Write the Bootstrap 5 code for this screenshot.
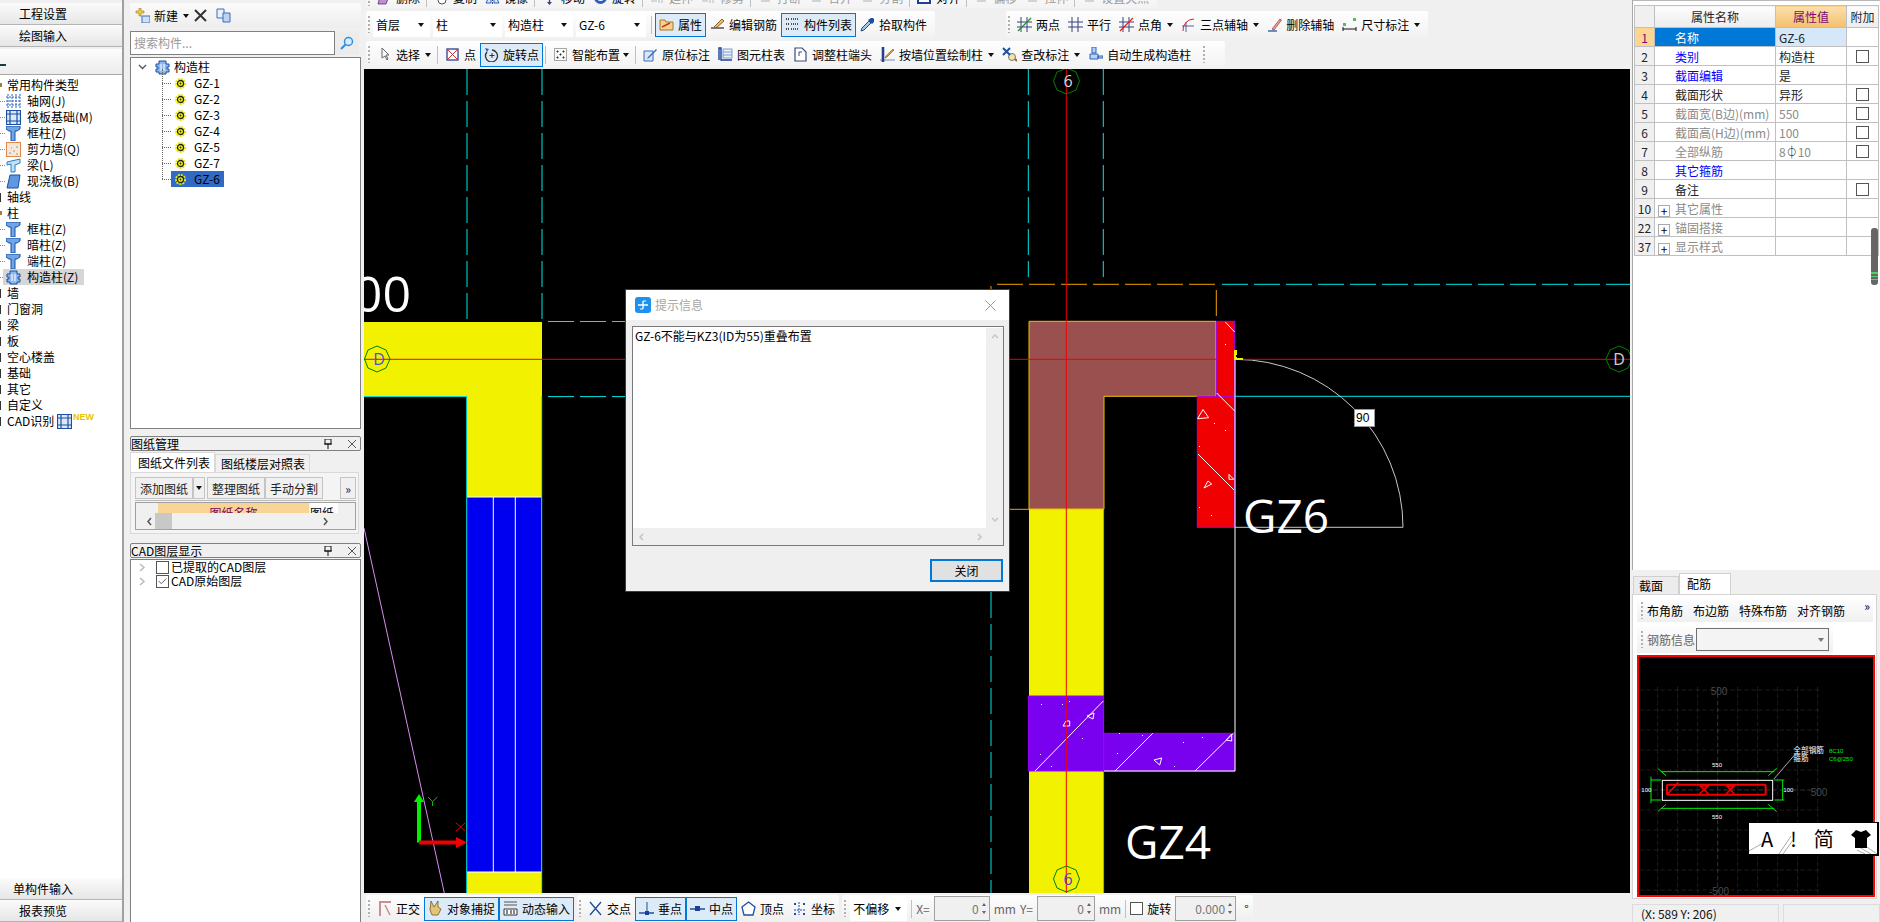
<!DOCTYPE html>
<html>
<head>
  <meta charset="utf-8">
  <title>钢筋算量</title>
  <link href="https://cdn.jsdelivr.net/npm/bootstrap@5.3.2/dist/css/bootstrap.min.css" rel="stylesheet" type="text/css" />
  <style>
    html, body { height: 922px; overflow: hidden; }
    body { background: #f0f0f0; color: #000; font: 12px/16px "Noto Sans CJK SC", "Liberation Sans", sans-serif; }
    .ic { width: 15px; height: 15px; flex: none; display: block; }
    .app { width: 1880px; height: 922px; }

    /* left navigation */
    .side-nav { width: 124px; flex: none; border-right: 2px solid #a0a0a0; padding-top: 3px; }
    .nav-strip { height: 22px; line-height: 21px; padding-left: 19px; background: linear-gradient(#fbfbfb, #e6e6e6); border-bottom: 1px solid #b5b5b5; }
    .nav-strip.wide { padding-left: 13px; }
    .tree-head { height: 25px; margin-top: 2px; background: linear-gradient(#fcfcfc, #ececec); position: relative; }
    .tree-head i { position: absolute; left: 0; top: 15px; width: 6px; height: 2px; background: #1b3a44; }
    .nav-tree { background: #fff; padding-top: 2px; flex: 1 1 auto; border-top: 1px solid #a8a8a8; }
    .nav-row { height: 16px; display: flex; align-items: center; white-space: nowrap; position: relative; }
    .nav-row.grp { padding-left: 7px; }
    .nav-row.grp::before { content: ""; position: absolute; left: 0; top: 4px; width: 1px; height: 9px; background: #333; }
    .nav-row.grp.open::before { top: 6px; width: 2px; height: 4px; background: #a08040; }
    .nav-row.leaf { padding-left: 6px; gap: 6px; }
    .nav-row.leaf::before { content: ""; position: absolute; left: 0; top: 8px; width: 5px; border-top: 1px dotted #888; }
    .nav-row.cur::after { content: ""; position: absolute; z-index: 0; left: 3px; top: 0; width: 81px; height: 16px; background: #d6d6d6; }
    .nav-row.cur > * { position: relative; z-index: 1; }
    .new-tag { color: #e8c400; font-weight: 700; font-size: 9px; line-height: 8px; margin: -8px 0 0 1px; font-family: "Liberation Sans", sans-serif; }

    /* component panel */
    .mid-col { width: 240px; flex: none; padding: 3px 3px 0 6px; }
    .mid-bar { height: 25px; background: linear-gradient(#fafafa, #eee); padding-left: 5px; }
    .search-line { height: 24px; margin-top: 3px; width: 230px; }
    .search-in { width: 205px; height: 24px; background: #fff; border: 1px solid #808080; color: #9a9a9a; padding-left: 3px; line-height: 22px; }
    .search-btn { width: 24px; height: 24px; display: flex; align-items: center; justify-content: center; background: #ececec; }
    .comp-tree { width: 231px; height: 372px; margin-top: 2px; background: #fff; border: 1px solid #808080; padding: 1px 0 0 7px; }
    .comp-list { position: relative; margin-left: 24px; }
    .comp-list::before { content: ""; position: absolute; left: 0; top: -6px; bottom: 8px; border-left: 1px dotted #666; }
    .comp-row { height: 16px; display: flex; align-items: center; }
    .comp-row::before { content: ""; width: 9px; border-top: 1px dotted #666; flex: none; }
    .comp-name { display: inline-flex; align-items: center; gap: 8px; height: 16px; padding: 0 4px; }
    .comp-row.cur .comp-name { background: #316ac5; }
    .dock-head { height: 15px; width: 231px; line-height: 13px; border: 1px solid #808080; border-radius: 2px; margin-top: 7px; display: flex; align-items: center; }
    .dock-head span { flex: 1 1 auto; }
    .dock-tabs { width: 229px; height: 20px; margin-top: 1px; align-items: flex-end; }
    .dock-tab { padding: 0 4px 0 7px; height: 20px; line-height: 19px; background: #fff; border: 1px solid #d9d9d9; border-bottom: 0; }
    .dock-tab.off { height: 18px; line-height: 18px; background: #f0f0f0; padding: 0 4px 0 5px; }
    .dock-panel { width: 229px; height: 62px; border: 1px solid #d9d9d9; padding: 4px 2px 0 4px; background: #f4f4f4; }
    .dock-btns { height: 24px; border-bottom: 1px solid #bbb; }
    .dock-btn { height: 22px; line-height: 21px; border: 1px solid #c4c4c4; background: #f0f0f0; padding: 0 4px; color: #222; }
    .dock-btn .tri { margin: 0 2px; }
    .sheet { height: 28px; margin-top: 1px; border: 1px solid #a0a0a0; position: relative; overflow: hidden; background: #f0f0f0; }
    .sheet-head { position: absolute; left: 22px; top: 0; width: 151px; height: 10px; background: #f8d595; color: #800060; text-align: center; line-height: 19px; }
    .sheet-cell { position: absolute; left: 174px; top: 0; width: 28px; height: 10px; background: #fff; line-height: 19px; overflow: hidden; }
    .sheet-scroll { position: absolute; left: 2px; right: 2px; top: 10px; height: 16px; background: #f0f0f0; }
    .sheet-thumb { position: absolute; left: 17px; width: 17px; top: 0; height: 16px; background: #c8c8c8; }
    .cad-tree { width: 231px; height: 364px; margin-top: 1px; background: #fff; border: 1px solid #808080; padding: 0 0 0 8px; }
    .cad-row { height: 14px; display: flex; align-items: center; gap: 2px; white-space: nowrap; }
    .chk { width: 13px; height: 13px; border: 1px solid #555; background: #fff; flex: none; display: block; }

    /* main work area */
    .work { width: 1266px; flex: none; }
    .tb-clip { height: 10px; overflow: hidden; }
    .tb-clip .tb-row { margin-top: -16px; }
    .tb-row { height: 27px; margin-top: 3px; padding-left: 2px; gap: 0; }
    .tb-box { height: 27px; display: flex; align-items: center; background: linear-gradient(#fefefe, #f2f2f2); border-radius: 2px; padding-right: 4px; flex: none; }
    .grip { width: 2px; height: 17px; margin: 0 3px 0 2px; flex: none; background: repeating-linear-gradient(#b0b0b0 0 2px, transparent 2px 4px); }
    .tool { display: flex; align-items: center; gap: 4px; height: 24px; padding: 0 3px; white-space: nowrap; flex: none; border: 1px solid transparent; }
    .tool.on { border-color: #0078d7; background: #dcebf7; }
    .tool.dim { color: #9b9b9b; }
    .vbar { width: 1px; height: 18px; background: #c0c0c0; margin: 0 3px 0 2px; flex: none; }
    .tri { width: 0; height: 0; border: 3px solid transparent; border-top: 4px solid #111; border-bottom: 0; margin: 0 0 0 1px; flex: none; display: block; }
    .combo { height: 25px; background: #fff; display: flex; align-items: center; justify-content: space-between; padding: 0 6px 0 3px; margin-right: 3px; flex: none; }
    .canvas-box { position: relative; height: 824px; margin-top: 1px; background: #000; }
    .canvas-box svg { display: block; }
    .cad-label { font-family: "Open Sans", sans-serif; fill: #fff; font-size: 46px; }

    /* dialog over canvas */
    .msg-box { position: absolute; left: 261px; top: 220px; width: 385px; height: 303px; background: #efefef; border: 1px solid #3c3c3c; }
    .msg-title { height: 30px; background: #fff; padding: 0 9px; }
    .msg-title span { color: #a6a6a6; margin-left: 4px; flex: 1 1 auto; }
    .msg-text { position: relative; margin: 6px 5px 0 6px; height: 220px; background: #fff; border: 1px solid #7a7a7a; padding: 1px 2px; }
    .msg-vs { position: absolute; right: 0; top: 1px; bottom: 17px; width: 17px; background: #efefef; display: flex; flex-direction: column; justify-content: space-between; align-items: center; padding: 5px 0; }
    .msg-hs { position: absolute; left: 0; right: 0; bottom: 0; height: 17px; background: #efefef; display: flex; justify-content: space-between; align-items: center; padding: 0 20px 0 5px; }
    .msg-btn { width: 73px; height: 23px; margin: 13px 6px 0 auto; line-height: 19px; text-align: center; background: #e1e1e1; border: 2px solid #0078d7; }

    /* bottom bar */
    .snap-bar { height: 29px; padding: 2px 0 0 2px; gap: 3px; }
    .snap-bar .tb-box { background: linear-gradient(#fdfdfd, #efefef); }
    .num-box { height: 25px; background: #f0f0f0; border: 1px solid #a0a0a0; display: flex; align-items: center; justify-content: flex-end; color: #777; padding-right: 3px; flex: none; gap: 3px; }
    .spin { display: flex; flex-direction: column; gap: 5px; }
    .spin i { display: block; width: 0; height: 0; border: 2.5px solid transparent; }
    .spin i:first-child { border-bottom: 3px solid #666; border-top: 0; }
    .spin i:last-child { border-top: 3px solid #666; border-bottom: 0; }
    .grey-txt { color: #666; }

    /* property panel */
    .prop-col { width: 250px; flex: none; padding-left: 2px; }
    .prop-box { height: 570px; border-top: 1px solid #b8b8b8; border-left: 1px solid #a8a8a8; background: #fff; padding: 4px 0 0 1px; position: relative; }
    .prop-table { width: 244px; table-layout: fixed; margin: 0; --bs-table-border-color: #c0c0c0; --bs-table-bg: transparent; }
    .prop-table th, .prop-table td { height: 19px; padding: 0; line-height: 17px; font-weight: 400; white-space: nowrap; overflow: hidden; vertical-align: middle; }
    .prop-table thead th { height: 22px; text-align: center; background: linear-gradient(#fdfdfd, #ececec); }
    .prop-table thead th.val { background: linear-gradient(#fce0ae, #f4bf6a); color: #7c0a74; }
    .prop-table .idx { background: #f0f0f0; text-align: center; }
    .prop-table .nm { padding-left: 20px; }
    .prop-table .vl { padding-left: 3px; }
    .prop-table .chk { margin: 0 auto; }
    .prop-table .ln { color: #0000ff; }
    .prop-table .gr { color: #8a8a8a; }
    .prop-table tr.sel .idx { background: #fbd591; color: #7c0a74; }
    .prop-table tr.sel .nm { background: #0078d7; color: #fff; }
    .prop-table tr.sel .vl { background: #d6e8f7; }
    .plus { display: inline-block; width: 12px; height: 12px; margin: 0 5px 0 -17px; border: 1px solid #aaa; color: #000; text-align: center; line-height: 9px; vertical-align: -2px; }
    .prop-thumb { position: absolute; right: 2px; top: 227px; width: 7px; height: 57px; border-radius: 3px; background: linear-gradient(#666 0 78%, #4fd26a 78% 80%, #666 80% 84%, #4fd26a 84% 86%, #666 86% 90%, #4fd26a 90% 92%, #666 92%); }
    .rebar-tabs { height: 24px; padding-left: 1px; align-items: flex-end; }
    .rebar-tab { width: 46px; height: 18px; line-height: 18px; padding-left: 5px; border: 1px solid #d0d0d0; border-bottom: 0; background: #ececec; }
    .rebar-tab.on { width: 52px; height: 21px; background: #fff; line-height: 19px; padding-left: 7px; }
    .rebar-panel { width: 245px; height: 305px; border: 1px solid #d4d4d4; padding: 4px 3px 0 4px; background: #fff; }
    .rebar-bar { height: 23px; background: linear-gradient(#fdfdfd, #f0f0f0); width: 236px; position: relative; }
    .rebar-bar b { position: absolute; right: 3px; top: 0; font-weight: 400; line-height: 14px; }
    .rebar-info { height: 27px; width: 196px; margin-top: 4px; background: linear-gradient(#fdfdfd, #f0f0f0); }
    .rebar-combo { width: 133px; height: 23px; border: 1px solid #707070; background: #f4f4f4; display: flex; align-items: center; justify-content: flex-end; margin-left: 1px; padding-right: 4px; }
    .rebar-view { position: relative; width: 238px; height: 242px; margin-top: 2px; border: 2px solid #f00; background: #000; }
    .rebar-view svg { display: block; }
    .ime-bar { position: absolute; left: 109px; top: 165px; width: 131px; height: 34px; background: #fff; border: 1px solid #000; border-right-width: 2px; border-bottom-width: 2px; padding: 0 6px 0 12px; }
    .ime-bar span { font-size: 20px; line-height: 30px; position: relative; }
    .ime-bar svg.ime-rays { position: absolute; left: 0; top: 0; }
    .status-line { height: 18px; margin-top: 5px; gap: 4px; }
    .status-cell { height: 18px; border: 1px solid #dcdcdc; border-bottom: 0; padding-left: 8px; line-height: 17px; color: #111; }
  </style>
</head>
<body>

  <!-- shared icons -->
  <svg width="0" height="0" class="position-absolute">
    <symbol id="i-col" viewBox="0 0 15 15"><path d="M0 0h14v3l-3 2H9v10H5V5H3L0 3z" fill="#6fa6e8" stroke="#1c4fa0"/></symbol>
    <symbol id="i-grid" viewBox="0 0 15 15"><path d="M2 0v15M6 0v15M10 0v15M14 0v15M0 3h15M0 7h15M0 11h15" stroke="#2a5fc0" fill="none" stroke-dasharray="2 1"/></symbol>
    <symbol id="i-raft" viewBox="0 0 15 15"><path d="M.5.5h14v14H.5zM4 .5v14M11 .5v14M.5 4h14M.5 11h14" fill="#dbe8fa" stroke="#1c4fa0" stroke-width="1.2"/></symbol>
    <symbol id="i-wall" viewBox="0 0 15 15"><rect x=".5" y=".5" width="14" height="14" fill="#f6e7da" stroke="#e0894c"/><path d="M3 11h2M7 9h2M10 12h2M5 6h1M10 5h2" stroke="#999"/></symbol>
    <symbol id="i-beam" viewBox="0 0 15 15"><path d="M1 4l13-3v4L9 7v7H5V6L1 7z" fill="#bfe0f7" stroke="#2a7fc0"/></symbol>
    <symbol id="i-slab" viewBox="0 0 15 15"><path d="M4 1h10l-2 13H1z" fill="#5f97e0" stroke="#1c4fa0"/></symbol>
    <symbol id="i-gz" viewBox="0 0 15 15"><path d="M4 1h7v3h3v3h-2v2h2v3h-3v2H4v-2H1V9h2V7H1V4h3z" fill="#8db8ee" stroke="#1c4fa0"/><path d="M6 4v7M9 4v7" stroke="#fff"/></symbol>
    <symbol id="i-gear" viewBox="0 0 11 11"><circle cx="5.5" cy="5.5" r="4.500" fill="none" stroke="#e8e800" stroke-width="2" stroke-dasharray="2 1"/><circle cx="5.5" cy="5.5" r="3" fill="#ff0" stroke="#222" stroke-width="1.300"/><circle cx="5.5" cy="5.5" r=".9" fill="#222"/></symbol>
    <symbol id="i-x" viewBox="0 0 15 15"><path d="M2 2l11 11M13 2L2 13" stroke="#333" stroke-width="2"/></symbol>
    <symbol id="i-copy" viewBox="0 0 15 15"><path d="M1 1h7v9H1z" fill="#e8f0fb" stroke="#3a6cb8"/><path d="M7 5h7v9H7z" fill="#bcd4f2" stroke="#3a6cb8"/></symbol>
    <symbol id="i-prop" viewBox="0 0 15 15"><path d="M1 3h5l1 2h7v8H1z" fill="#f5d28a" stroke="#a8782a"/><path d="M3 10l8-4" stroke="#c33" stroke-width="1.5"/></symbol>
    <symbol id="i-rebar" viewBox="0 0 15 15"><path d="M1 11h13" stroke="#000"/><path d="M4 10l8-8 2 2-8 7z" fill="#e8c070" stroke="#8a6020"/></symbol>
    <symbol id="i-list" viewBox="0 0 15 15"><path d="M1 2h3M1 7h3M1 12h3" stroke="#444" stroke-dasharray="1 1" stroke-width="2"/><path d="M6 2h8M6 7h8M6 12h8" stroke="#555" stroke-dasharray="1 1" stroke-width="2"/></symbol>
    <symbol id="i-pick" viewBox="0 0 15 15"><path d="M1 14l3-1 7-7-2-2-7 7z" fill="#9cc8ef" stroke="#234a86"/><path d="M8 3l4 4 2-2V2l-1-1h-2z" fill="#1c4fa0"/></symbol>
    <symbol id="i-arrow" viewBox="0 0 15 15"><path d="M5 1v10l3-2 2 4 1-1-2-4h3z" fill="#fff" stroke="#666"/></symbol>
    <symbol id="i-point" viewBox="0 0 15 15"><rect x="2" y="2" width="11" height="11" fill="#fff" stroke="#2a3f8f" stroke-width="1.3"/><path d="M3 3l9 9M12 3l-9 9" stroke="#c33"/></symbol>
    <symbol id="i-rot" viewBox="0 0 15 15"><path d="M3 5a6 6 0 1 0 5-2" fill="none" stroke="#333" stroke-width="1.3"/><path d="M1 1l4 1-2 3z" fill="#2a5fc0"/><path d="M8 6v5M5.500 8.500h5" stroke="#333"/></symbol>
    <symbol id="i-smart" viewBox="0 0 15 15"><rect x="1.500" y="1.500" width="12" height="12" fill="none" stroke="#555" stroke-dasharray="1 1"/><path d="M4 4h1v1H4zM10 4h1v1h-1zM7 7h1v1H7zM4 10h1v1H4zM10 10h1v1h-1z" stroke="#233"/></symbol>
    <symbol id="i-pen" viewBox="0 0 15 15"><path d="M1 4h9v10H1z" fill="#d8e6f8" stroke="#3a6cb8"/><path d="M5 10l8-8 1 1-8 8-2 1z" fill="#3a6cb8"/></symbol>
    <symbol id="i-table" viewBox="0 0 15 15"><path d="M1 13V1h2v12h11" fill="none" stroke="#1c3f98" stroke-width="1.4"/><path d="M5 2h9v9H5z" fill="#eaf1fb" stroke="#7a9ad0"/><path d="M5 5h9M5 8h9" stroke="#7a9ad0"/></symbol>
    <symbol id="i-end" viewBox="0 0 15 15"><path d="M2 1h7l4 4v9H2z" fill="#fff" stroke="#3a4a78" stroke-width="1.2"/><path d="M6 9V5h3" fill="none" stroke="#3a4a78"/></symbol>
    <symbol id="i-wallp" viewBox="0 0 15 15"><path d="M2 0h2v15H2zM0 13h15" fill="#2a3f8f" stroke="#2a3f8f" stroke-width=".6"/><path d="M6 9l7-7 1 1-7 7-2 1z" fill="#e0a040" stroke="#7a5010" stroke-width=".6"/></symbol>
    <symbol id="i-check" viewBox="0 0 15 15"><circle cx="10" cy="10" r="3.500" fill="#f4e4a8" stroke="#777"/><path d="M1 1l7 7M8 1L1 8" stroke="#1c4fa0" stroke-width="2"/><path d="M13 12l2 2" stroke="#a06020" stroke-width="2"/></symbol>
    <symbol id="i-auto" viewBox="0 0 15 15"><path d="M4 0h4v6H4zM2 7h8v5H2zM10 9h5v2h-5z" fill="#bcd4f2" stroke="#2a5fc0"/></symbol>
    <symbol id="i-2pt" viewBox="0 0 15 15"><path d="M4 0v15M10 0v15M0 5h15M0 10h15" stroke="#39407e"/><path d="M1 14L14 1" stroke="#2a8a2a" stroke-width="1.300"/></symbol>
    <symbol id="i-para" viewBox="0 0 15 15"><path d="M4 0v15M10 0v15M0 5h15M0 10h15" stroke="#39407e"/></symbol>
    <symbol id="i-ang" viewBox="0 0 15 15"><path d="M4 0v15M10 0v15M0 5h15M0 10h15" stroke="#39407e"/><path d="M1 14L14 1" stroke="#d22" stroke-width="1.300"/></symbol>
    <symbol id="i-3pt" viewBox="0 0 15 15"><path d="M2 14A11 11 0 0 1 13 2" fill="none" stroke="#d22"/><path d="M5 5v10M1 9h12" stroke="#39407e" stroke-width=".8"/></symbol>
    <symbol id="i-del" viewBox="0 0 15 15"><path d="M1 14h9" stroke="#3a6cb8" stroke-width="1.500"/><path d="M5 12l8-10 1.500 1L7 13z" fill="#e0a8a0" stroke="#a03020" stroke-width=".7"/></symbol>
    <symbol id="i-dim" viewBox="0 0 15 15"><path d="M1 10v4M14 10v4M1 12h13" stroke="#111"/><path d="M1 6h3v3H1zM11 1h3v3h-3z" fill="#5bb85b"/></symbol>
    <symbol id="i-del2" viewBox="0 0 15 15"><path d="M4 1h6l1 4H3zM3 6l-2 8h8l3-8z" fill="#c090d0" stroke="#402060" stroke-width=".7"/></symbol>
    <symbol id="i-copy2" viewBox="0 0 15 15"><circle cx="8" cy="10" r="4" fill="#fff" stroke="#555"/><path d="M6 1h4v5H6z" fill="#dde" stroke="#555"/></symbol>
    <symbol id="i-mirror" viewBox="0 0 15 15"><path d="M7.500 0v15" stroke="#39407e" stroke-dasharray="2 1"/><path d="M1 13l5-10v10zM14 13L9 3v10z" fill="#dbe8fa" stroke="#2a5fc0"/></symbol>
    <symbol id="i-move" viewBox="0 0 15 15"><path d="M7.500 1v13M1 7.500h13" stroke="#39407e" stroke-width="1.300"/><path d="M5 12l2.500 3 2.500-3z" fill="#39407e"/></symbol>
    <symbol id="i-turn" viewBox="0 0 15 15"><circle cx="7.500" cy="7.500" r="5" fill="#fff" stroke="#2a5fc0" stroke-width="3"/></symbol>
    <symbol id="i-gray" viewBox="0 0 15 15"><path d="M1 3h6M1 7h6M1 11h6M9 1v12M12 1v12" stroke="#b8b8b8"/></symbol>
    <symbol id="i-gray2" viewBox="0 0 15 15"><path d="M1 4h13v4H1zM3 11h9" fill="none" stroke="#b0b0b0"/></symbol>
    <symbol id="i-align" viewBox="0 0 15 15"><path d="M1 1h12v12H1z" fill="#fff" stroke="#1c3f98" stroke-width="2"/><path d="M3 7h9" stroke="#c22" stroke-width="2"/></symbol>
    <symbol id="i-ortho" viewBox="0 0 15 15"><path d="M2 1h12M3 1v14" stroke="#c89090" stroke-width="2"/><path d="M8 4l5 10" stroke="#c89090" stroke-width="1.500"/></symbol>
    <symbol id="i-snap" viewBox="0 0 15 15"><path d="M3 0l3 6 4-6v6l3 2-3 6H4L2 9z" fill="#e3c37a" stroke="#7a5a1a" stroke-width=".8"/></symbol>
    <symbol id="i-dyn" viewBox="0 0 15 15"><path d="M1 1h13M1 4h13" stroke="#555"/><path d="M1 8h13v6H1z" fill="#fff" stroke="#333"/><path d="M4 9v4M8 9v4M11 9v4" stroke="#111"/></symbol>
    <symbol id="i-cross" viewBox="0 0 15 15"><path d="M2 1l11 13M13 1L2 14" stroke="#1c4fa0" stroke-width="1.300"/></symbol>
    <symbol id="i-perp" viewBox="0 0 15 15"><path d="M0 12h15" stroke="#1c4fa0" stroke-width="1.500"/><path d="M8 1v11" stroke="#1c4fa0"/><path d="M6 10h4v4H6z" fill="#1c3f98"/></symbol>
    <symbol id="i-mid" viewBox="0 0 15 15"><path d="M0 8h15" stroke="#1c4fa0" stroke-width="1.500"/><path d="M5 5h5v5H5z" fill="#1c3f98"/></symbol>
    <symbol id="i-vert" viewBox="0 0 15 15"><path d="M7.500 1L14 6l-2 8H3L1 6z" fill="#fff" stroke="#1c4fa0" stroke-width="1.300"/></symbol>
    <symbol id="i-coord" viewBox="0 0 15 15"><path d="M7 1v13M2 9h12" stroke="#1c4fa0" stroke-dasharray="2 1"/><path d="M2 2h2v2H2zM11 2h2v2h-2zM2 12h2v2H2zM11 12h2v2h-2z" fill="#1c4fa0"/></symbol>
  </svg>

  <div class="app d-flex">

    <!-- left navigation -->
    <nav class="side-nav d-flex flex-column">
      <div class="nav-strip">工程设置</div>
      <div class="nav-strip">绘图输入</div>
      <div class="tree-head"><i></i></div>
      <div class="nav-tree">
        <div class="nav-row grp open">常用构件类型</div>
        <div class="nav-row leaf"><svg class="ic"><use href="#i-grid"/></svg>轴网(J)</div>
        <div class="nav-row leaf"><svg class="ic"><use href="#i-raft"/></svg>筏板基础(M)</div>
        <div class="nav-row leaf"><svg class="ic"><use href="#i-col"/></svg>框柱(Z)</div>
        <div class="nav-row leaf"><svg class="ic"><use href="#i-wall"/></svg>剪力墙(Q)</div>
        <div class="nav-row leaf"><svg class="ic"><use href="#i-beam"/></svg>梁(L)</div>
        <div class="nav-row leaf"><svg class="ic"><use href="#i-slab"/></svg>现浇板(B)</div>
        <div class="nav-row grp">轴线</div>
        <div class="nav-row grp open">柱</div>
        <div class="nav-row leaf"><svg class="ic"><use href="#i-col"/></svg>框柱(Z)</div>
        <div class="nav-row leaf"><svg class="ic"><use href="#i-col"/></svg>暗柱(Z)</div>
        <div class="nav-row leaf"><svg class="ic"><use href="#i-col"/></svg>端柱(Z)</div>
        <div class="nav-row leaf cur"><svg class="ic"><use href="#i-gz"/></svg><span>构造柱(Z)</span></div>
        <div class="nav-row grp">墙</div>
        <div class="nav-row grp">门窗洞</div>
        <div class="nav-row grp">梁</div>
        <div class="nav-row grp">板</div>
        <div class="nav-row grp">空心楼盖</div>
        <div class="nav-row grp">基础</div>
        <div class="nav-row grp">其它</div>
        <div class="nav-row grp">自定义</div>
        <div class="nav-row grp">CAD识别&nbsp;<svg class="ic"><use href="#i-raft"/></svg><span class="new-tag">NEW</span></div>
      </div>
      <div class="nav-strip wide">单构件输入</div>
      <div class="nav-strip">报表预览</div>
    </nav>

    <!-- component list and drawing panels -->
    <aside class="mid-col">
      <div class="mid-bar d-flex align-items-center gap-1">
        <svg class="ic" viewBox="0 0 15 15"><path d="M1 3h3V0h2v3h3v2H6v3H4V5H1z" fill="#f2d24a" stroke="#9a7a10" stroke-width=".6"/><rect x="7" y="8" width="8" height="7" fill="#cfe0f6" stroke="#3a6cb8"/></svg>
        <span>新建</span><span class="tri"></span>
        <svg class="ic"><use href="#i-x"/></svg>
        <svg class="ic ms-1"><use href="#i-copy"/></svg>
      </div>
      <div class="search-line d-flex">
        <div class="search-in">搜索构件...</div>
        <div class="search-btn"><svg width="14" height="14" viewBox="0 0 14 14"><circle cx="8.500" cy="5.500" r="4" fill="#d9ecfb" stroke="#2f8fdf" stroke-width="1.500"/><path d="M5.500 8.500L1 13" stroke="#2f8fdf" stroke-width="2"/></svg></div>
      </div>
      <div class="comp-tree">
        <div class="d-flex align-items-center gap-1" style="height:16px">
          <svg width="9" height="6" viewBox="0 0 9 6"><path d="M1 1l3.500 3.500L8 1" fill="none" stroke="#555" stroke-width="1.300"/></svg>
          <svg class="ic ms-1"><use href="#i-gz"/></svg><span>构造柱</span>
        </div>
        <div class="comp-list">
          <div class="comp-row"><span class="comp-name"><svg width="11" height="11"><use href="#i-gear"/></svg>GZ-1</span></div>
          <div class="comp-row"><span class="comp-name"><svg width="11" height="11"><use href="#i-gear"/></svg>GZ-2</span></div>
          <div class="comp-row"><span class="comp-name"><svg width="11" height="11"><use href="#i-gear"/></svg>GZ-3</span></div>
          <div class="comp-row"><span class="comp-name"><svg width="11" height="11"><use href="#i-gear"/></svg>GZ-4</span></div>
          <div class="comp-row"><span class="comp-name"><svg width="11" height="11"><use href="#i-gear"/></svg>GZ-5</span></div>
          <div class="comp-row"><span class="comp-name"><svg width="11" height="11"><use href="#i-gear"/></svg>GZ-7</span></div>
          <div class="comp-row cur"><span class="comp-name"><svg width="11" height="11"><use href="#i-gear"/></svg>GZ-6</span></div>
        </div>
      </div>

      <div class="dock-head"><span>图纸管理</span>
        <svg width="8" height="10" viewBox="0 0 8 10" class="me-3"><path d="M1 0h6v5H1zM0 5h8M4 5v5" fill="none" stroke="#111"/></svg>
        <svg width="8" height="8" viewBox="0 0 8 8" class="me-1"><path d="M0 0l8 8M8 0L0 8" stroke="#555"/></svg>
      </div>
      <div class="dock-tabs d-flex">
        <div class="dock-tab">图纸文件列表</div>
        <div class="dock-tab off">图纸楼层对照表</div>
      </div>
      <div class="dock-panel">
        <div class="dock-btns d-flex align-items-start">
          <div class="dock-btn">添加图纸</div>
          <div class="dock-btn d-flex align-items-center px-0"><span class="tri"></span></div>
          <div class="dock-btn" style="margin-left:2px">整理图纸</div>
          <div class="dock-btn">手动分割</div>
          <div class="dock-btn ms-auto px-1">»</div>
        </div>
        <div class="sheet">
          <div class="sheet-head">图纸名称</div>
          <div class="sheet-cell">图纸</div>
          <div class="sheet-scroll d-flex align-items-center justify-content-between px-2">
            <span class="sheet-thumb"></span>
            <svg width="7" height="9" viewBox="0 0 7 9"><path d="M5 1L2 4.500 5 8" fill="none" stroke="#555" stroke-width="1.500"/></svg>
            <svg width="7" height="9" viewBox="0 0 7 9" class="me-3"><path d="M2 1l3 3.500L2 8" fill="none" stroke="#555" stroke-width="1.500"/></svg>
          </div>
        </div>
      </div>

      <div class="dock-head" style="margin-top:9px"><span>CAD图层显示</span>
        <svg width="8" height="10" viewBox="0 0 8 10" class="me-3"><path d="M1 0h6v5H1zM0 5h8M4 5v5" fill="none" stroke="#111"/></svg>
        <svg width="8" height="8" viewBox="0 0 8 8" class="me-1"><path d="M0 0l8 8M8 0L0 8" stroke="#555"/></svg>
      </div>
      <div class="cad-tree">
        <div class="cad-row"><svg width="7" height="9" viewBox="0 0 7 9" class="me-2"><path d="M1 1l4 3.500L1 8" fill="none" stroke="#bbb" stroke-width="1.500"/></svg><span class="chk"></span><span>已提取的CAD图层</span></div>
        <div class="cad-row"><svg width="7" height="9" viewBox="0 0 7 9" class="me-2"><path d="M1 1l4 3.500L1 8" fill="none" stroke="#bbb" stroke-width="1.500"/></svg><svg class="chk" viewBox="0 0 13 13"><path d="M2 6l3 3 6-6" fill="none" stroke="#444"/></svg><span>CAD原始图层</span></div>
      </div>
    </aside>

    <!-- work area -->
    <main class="work d-flex flex-column">
      <div class="tb-clip">
        <div class="tb-row d-flex">
          <div class="tb-box">
            <span class="grip"></span>
            <div class="tool"><svg class="ic"><use href="#i-del2"/></svg>删除</div>
            <span class="vbar"></span>
            <div class="tool"><svg class="ic"><use href="#i-copy2"/></svg>复制</div>
            <div class="tool"><svg class="ic"><use href="#i-mirror"/></svg>镜像</div>
            <span class="vbar"></span>
            <div class="tool"><svg class="ic"><use href="#i-move"/></svg>移动</div>
            <div class="tool"><svg class="ic"><use href="#i-turn"/></svg>旋转</div>
            <span class="vbar"></span>
            <div class="tool dim"><svg class="ic"><use href="#i-gray"/></svg>延伸</div>
            <div class="tool dim"><svg class="ic"><use href="#i-gray"/></svg>修剪</div>
            <span class="vbar"></span>
            <div class="tool dim"><svg class="ic"><use href="#i-gray2"/></svg>打断</div>
            <div class="tool dim"><svg class="ic"><use href="#i-gray2"/></svg>合并</div>
            <div class="tool dim"><svg class="ic"><use href="#i-gray2"/></svg>分割</div>
            <span class="vbar"></span>
            <div class="tool"><svg class="ic"><use href="#i-align"/></svg>对齐</div>
            <span class="vbar"></span>
            <div class="tool dim"><svg class="ic"><use href="#i-gray2"/></svg>偏移</div>
            <div class="tool dim"><svg class="ic"><use href="#i-gray2"/></svg>拉伸</div>
            <span class="vbar"></span>
            <div class="tool dim"><svg class="ic"><use href="#i-gray2"/></svg>设置夹点</div>
          </div>
        </div>
      </div>
      <div class="tb-row d-flex">
        <div class="tb-box">
          <span class="grip"></span>
          <div class="combo" style="width:57px">首层<span class="tri"></span></div>
          <div class="combo" style="width:69px">柱<span class="tri"></span></div>
          <div class="combo" style="width:68px">构造柱<span class="tri"></span></div>
          <div class="combo" style="width:70px">GZ-6<span class="tri"></span></div>
          <span class="vbar"></span>
          <div class="tool on"><svg class="ic"><use href="#i-prop"/></svg>属性</div>
          <div class="tool"><svg class="ic"><use href="#i-rebar"/></svg>编辑钢筋</div>
          <div class="tool on"><svg class="ic"><use href="#i-list"/></svg>构件列表</div>
          <div class="tool"><svg class="ic"><use href="#i-pick"/></svg>拾取构件</div>
        </div>
        <div class="tb-box" style="margin-left:71px">
          <span class="grip"></span>
          <div class="tool"><svg class="ic"><use href="#i-2pt"/></svg>两点</div>
          <div class="tool"><svg class="ic"><use href="#i-para"/></svg>平行</div>
          <div class="tool"><svg class="ic"><use href="#i-ang"/></svg>点角<span class="tri"></span></div>
          <div class="tool"><svg class="ic"><use href="#i-3pt"/></svg>三点辅轴<span class="tri"></span></div>
          <div class="tool"><svg class="ic"><use href="#i-del"/></svg>删除辅轴</div>
          <div class="tool"><svg class="ic"><use href="#i-dim"/></svg>尺寸标注<span class="tri"></span></div>
        </div>
      </div>
      <div class="tb-row d-flex">
        <div class="tb-box">
          <span class="grip"></span>
          <div class="tool"><svg class="ic"><use href="#i-arrow"/></svg>选择<span class="tri"></span></div>
          <span class="vbar"></span>
          <div class="tool"><svg class="ic"><use href="#i-point"/></svg>点</div>
          <div class="tool on"><svg class="ic"><use href="#i-rot"/></svg>旋转点</div>
          <span class="vbar"></span>
          <div class="tool"><svg class="ic"><use href="#i-smart"/></svg>智能布置<span class="tri" style="margin-left:-1px"></span></div>
          <span class="vbar"></span>
          <div class="tool"><svg class="ic"><use href="#i-pen"/></svg>原位标注</div>
          <div class="tool"><svg class="ic"><use href="#i-table"/></svg>图元柱表</div>
          <div class="tool"><svg class="ic"><use href="#i-end"/></svg>调整柱端头</div>
          <div class="tool"><svg class="ic"><use href="#i-wallp"/></svg>按墙位置绘制柱<span class="tri"></span></div>
          <div class="tool"><svg class="ic"><use href="#i-check"/></svg>查改标注<span class="tri"></span></div>
          <div class="tool"><svg class="ic"><use href="#i-auto"/></svg>自动生成构造柱</div>
          <span class="grip ms-2 me-3"></span>
        </div>
      </div>

      <div class="canvas-box">
        <svg width="1266" height="824" viewBox="364 69 1266 824">
          <!-- axis lines behind the walls -->
          <g fill="none" stroke="#00e5e5" stroke-dasharray="26 6">
            <path d="M467 69V321M542 69V321M1028.300 69V277M1103.300 69V277M991 592V893"/>
            <path d="M548 321.500H640M548 396.600H640M1222 284.300H1630"/>
          </g>
          <path d="M997 284.300H1215" fill="none" stroke="#f0a000" stroke-dasharray="26 6"/>
          <path d="M1216.300 290V316M991 286V290" stroke="#f0a000"/>

          <!-- left wall -->
          <path d="M364 322H542V893H467V396.600H364z" fill="#f2f200"/>
          <rect x="467" y="497" width="74.500" height="375" fill="#0000f0"/>
          <path d="M493.300 497V872M515.300 497V872M467 497H541.500M467 872H541.500" stroke="#fff"/>
          <path d="M364 396.600H466.700V893M541.700 396V893" fill="none" stroke="#00e5e5"/>
          <path d="M364 528L444.300 893" stroke="#d78cf0"/>

          <!-- right wall -->
          <path d="M1009 509.300H1029" stroke="#f0a000"/>
          <rect x="1029" y="509" width="74.500" height="384" fill="#f2f200"/>
          <path d="M1103.600 509V696M1103.600 771V893" stroke="#00e5e5"/>
          <path d="M1029 321.300H1216V396.300H1104V509H1029z" fill="#9b5050" stroke="#eec000"/>
          <path d="M1216.500 396.300H1630" stroke="#00e5e5"/>
          <g fill="#f00000" stroke="#a000ff">
            <rect x="1216.700" y="321.300" width="18" height="75"/>
            <rect x="1197.300" y="396.300" width="37.400" height="131"/>
          </g>
          <g fill="#7a00f0" stroke="#a000ff">
            <rect x="1028.600" y="696" width="75" height="75"/>
            <rect x="1103.700" y="733.300" width="131" height="37.700"/>
          </g>
          <g fill="none" stroke="#fff">
            <path d="M1225.300 322L1234.700 332M1216.700 393L1234.700 411M1198 454L1234 490"/>
            <path d="M1035 771L1103.300 701M1115 771L1152.700 733.300M1195 771L1233.300 733.300"/>
            <path d="M1197.600 418.700L1203 409.500L1208.700 417.700zM1208 481L1204 488L1211.700 484zM1229 474.300V479.300H1233.700z"/>
            <path d="M1087 716L1094 713L1093 719zM1066 721H1069.700V726H1063zM1154 760L1161.700 758L1159.700 765zM1226 740L1231.700 734V741z"/>
            <path d="M1104 771H1235V359.300"/>
            <path d="M1235 359.300A168 168 0 0 1 1403 527.300H1235" stroke="#c8c8c8"/>
          </g>
          <g fill="#fff">
            <rect x="1225" y="344" width="1" height="1"/><rect x="1214" y="423" width="1" height="1"/><rect x="1225" y="430" width="1" height="1"/><rect x="1199" y="446" width="1" height="1"/><rect x="1199" y="507" width="1" height="1"/><rect x="1211" y="515" width="1" height="1"/>
            <rect x="1041" y="704" width="1" height="1"/><rect x="1062" y="704" width="1" height="1"/><rect x="1069" y="701" width="1" height="1"/><rect x="1040" y="754" width="1" height="1"/><rect x="1051" y="766" width="1" height="1"/><rect x="1082" y="738" width="1" height="1"/><rect x="1119" y="733" width="1" height="1"/><rect x="1142" y="735" width="1" height="1"/><rect x="1183" y="742" width="1" height="1"/><rect x="1202" y="737" width="1" height="1"/><rect x="1117" y="753" width="1" height="1"/><rect x="1174" y="766" width="1" height="1"/>
          </g>

          <!-- red axes -->
          <path d="M364 359.300H1630M1066.300 69V893" stroke="#f00000"/>
          <path d="M1234 350h3v8h6v2h-9z" fill="#f2f200"/>
          <rect x="1236" y="355" width="2" height="2" fill="#000"/>

          <!-- axis bubbles -->
          <g fill="none" stroke="#008000">
            <polygon points="377,346 386,350 390,359 386,368 377,372 368,368 364.500,359 368,350"/>
            <polygon points="1619,346 1628,350 1632,359 1628,368 1619,372 1610,368 1606,359 1610,350"/>
            <polygon points="1066.500,68 1076,72 1079.500,81 1076,90 1066.500,94 1057,90 1053.500,81 1057,72"/>
            <polygon points="1066.500,866 1076,870 1079.500,879 1076,888 1066.500,892 1057,888 1053.500,879 1057,870"/>
          </g>
          <g text-anchor="middle" font-family="Open Sans, sans-serif" font-size="16">
            <text x="379" y="365" fill="#5050d0">D</text>
            <text x="1619" y="365" fill="#d0d0d0">D</text>
            <text x="1068" y="87" fill="#d8d8d8">6</text>
            <text x="1068" y="885" fill="#5040d0">6</text>
          </g>

          <!-- dimension box and big labels -->
          <rect x="1354.500" y="409.500" width="20" height="17" fill="#fff" stroke="#999"/>
          <text x="1356" y="422" font-family="Liberation Sans, sans-serif" font-size="12" fill="#000">90</text>
          <text class="cad-label" x="1243" y="533">GZ6</text>
          <text class="cad-label" x="1125" y="859">GZ4</text>
          <text class="cad-label" x="411" y="312" text-anchor="end" style="font-size:50px">00</text>

          <!-- ucs -->
          <path d="M419 842.500V802" stroke="#00f000" stroke-width="4"/>
          <path d="M414 802L419 794L424 802z" fill="#00f000"/>
          <path d="M419 842.500H458" stroke="#f00000" stroke-width="4"/>
          <path d="M456 837L467 842.500L456 848z" fill="#f00000"/>
          <path d="M428 797l4.500 4.500 5-4.500M432.500 801.500V806" fill="none" stroke="#00c000"/>
          <path d="M456 823l9 8M465 823l-9 8" stroke="#e00000"/>
        </svg>

        <!-- message dialog -->
        <div class="msg-box">
          <div class="msg-title d-flex align-items-center">
            <svg width="16" height="16" viewBox="0 0 16 16"><rect width="16" height="16" rx="3" fill="#1e90f0"/><path d="M3 8h10M8 4v8" stroke="#fff" stroke-width="1.300"/><path d="M8 4h3M5 12h3" stroke="#fff"/></svg>
            <span>提示信息</span>
            <svg width="11" height="11" viewBox="0 0 11 11" class="me-1"><path d="M.5.5l10 10M10.500.5l-10 10" stroke="#999"/></svg>
          </div>
          <div class="msg-text">GZ-6不能与KZ3(ID为55)重叠布置
            <div class="msg-vs">
              <svg width="8" height="6" viewBox="0 0 8 6"><path d="M1 5l3-3 3 3" fill="none" stroke="#c4c4c4" stroke-width="1.500"/></svg>
              <svg width="8" height="6" viewBox="0 0 8 6"><path d="M1 1l3 3 3-3" fill="none" stroke="#c4c4c4" stroke-width="1.500"/></svg>
            </div>
            <div class="msg-hs">
              <svg width="6" height="8" viewBox="0 0 6 8"><path d="M5 1L2 4l3 3" fill="none" stroke="#c4c4c4" stroke-width="1.500"/></svg>
              <svg width="6" height="8" viewBox="0 0 6 8"><path d="M1 1l3 3-3 3" fill="none" stroke="#c4c4c4" stroke-width="1.500"/></svg>
            </div>
          </div>
          <div class="msg-btn">关闭</div>
        </div>
      </div>

      <div class="snap-bar d-flex">
        <div class="tb-box pe-0">
          <span class="grip"></span>
          <div class="tool"><svg class="ic"><use href="#i-ortho"/></svg>正交</div>
          <div class="tool on"><svg class="ic"><use href="#i-snap"/></svg>对象捕捉</div>
          <div class="tool on"><svg class="ic"><use href="#i-dyn"/></svg>动态输入</div>
        </div>
        <div class="tb-box pe-0">
          <span class="grip"></span>
          <div class="tool"><svg class="ic"><use href="#i-cross"/></svg>交点</div>
          <div class="tool on"><svg class="ic"><use href="#i-perp"/></svg>垂点</div>
          <div class="tool on"><svg class="ic"><use href="#i-mid"/></svg>中点</div>
          <div class="tool"><svg class="ic"><use href="#i-vert"/></svg>顶点</div>
          <div class="tool"><svg class="ic"><use href="#i-coord"/></svg>坐标</div>
        </div>
        <div class="tb-box gap-1">
          <span class="grip me-0"></span>
          <div class="combo me-0" style="width:57px">不偏移<span class="tri"></span></div>
          <span class="vbar m-0"></span>
          <span class="grey-txt">X=</span>
          <div class="num-box" style="width:56px">0<span class="spin"><i></i><i></i></span></div>
          <span class="grey-txt">mm</span>
          <span class="grey-txt">Y=</span>
          <div class="num-box" style="width:58px">0<span class="spin"><i></i><i></i></span></div>
          <span class="grey-txt">mm</span>
          <span class="vbar m-0"></span>
          <span class="chk"></span>
          <span>旋转</span>
          <div class="num-box" style="width:61px">0.000<span class="spin"><i></i><i></i></span></div>
          <span class="ms-1">°</span>
        </div>
      </div>
    </main>

    <!-- properties -->
    <aside class="prop-col">
      <div class="prop-box">
        <table class="table table-bordered prop-table">
          <colgroup><col style="width:20px"><col style="width:121px"><col style="width:71px"><col style="width:32px"></colgroup>
          <thead><tr><th class="idx"></th><th>属性名称</th><th class="val">属性值</th><th>附加</th></tr></thead>
          <tbody>
            <tr class="sel"><td class="idx">1</td><td class="nm">名称</td><td class="vl">GZ-6</td><td></td></tr>
            <tr><td class="idx">2</td><td class="nm ln">类别</td><td class="vl">构造柱</td><td><span class="chk"></span></td></tr>
            <tr><td class="idx">3</td><td class="nm ln">截面编辑</td><td class="vl">是</td><td></td></tr>
            <tr><td class="idx">4</td><td class="nm">截面形状</td><td class="vl">异形</td><td><span class="chk"></span></td></tr>
            <tr><td class="idx">5</td><td class="nm gr">截面宽(B边)(mm)</td><td class="vl gr">550</td><td><span class="chk"></span></td></tr>
            <tr><td class="idx">6</td><td class="nm gr">截面高(H边)(mm)</td><td class="vl gr">100</td><td><span class="chk"></span></td></tr>
            <tr><td class="idx">7</td><td class="nm gr">全部纵筋</td><td class="vl gr">8<span class="text-black">⏀</span>10</td><td><span class="chk"></span></td></tr>
            <tr><td class="idx">8</td><td class="nm ln">其它箍筋</td><td class="vl"></td><td></td></tr>
            <tr><td class="idx">9</td><td class="nm">备注</td><td class="vl"></td><td><span class="chk"></span></td></tr>
            <tr><td class="idx">10</td><td class="nm gr"><span class="plus">+</span>其它属性</td><td></td><td></td></tr>
            <tr><td class="idx">22</td><td class="nm gr"><span class="plus">+</span>锚固搭接</td><td></td><td></td></tr>
            <tr><td class="idx">37</td><td class="nm gr"><span class="plus">+</span>显示样式</td><td></td><td></td></tr>
          </tbody>
        </table>
        <span class="prop-thumb"></span>
      </div>

      <div class="rebar-tabs d-flex">
        <div class="rebar-tab">截面</div>
        <div class="rebar-tab on">配筋</div>
      </div>
      <div class="rebar-panel">
        <div class="rebar-bar d-flex align-items-center">
          <span class="grip ms-1 me-1"></span>
          <span class="d-flex" style="gap:10px"><span>布角筋</span><span>布边筋</span><span>特殊布筋</span><span>对齐钢筋</span></span>
          <b>»</b>
        </div>
        <div class="rebar-info d-flex align-items-center">
          <span class="grip ms-1 me-1"></span>
          <span class="grey-txt">钢筋信息</span>
          <div class="rebar-combo"><span class="tri" style="border-top-color:#777"></span></div>
        </div>
        <div class="rebar-view">
          <svg width="234" height="238" viewBox="24 261 702 714">
            <g stroke="#555" stroke-dasharray="14 7" fill="none">
              <path d="M80 350V970M140 350V970M200 350V970M320 350V970M380 350V970M440 350V970M500 350V970M560 350V970"/>
              <path d="M25 360H570M25 420H570M25 480H570M25 540H570M25 600H570M25 720H570M25 780H570M25 840H570M25 900H570M25 960H570"/>
            </g>
            <path d="M260 350V970M25 660H570" stroke="#999" stroke-dasharray="14 7"/>
            <g font-family="Liberation Sans, sans-serif" font-size="30" fill="#4a4a4a" text-anchor="middle">
              <text x="264" y="374">500</text>
              <text x="564" y="677">500</text>
              <text x="264" y="975">-500</text>
            </g>
            <path d="M60 620V700M90 605H430M90 715H430M455 630V690M60 630H90M60 690H90M430 630H460M430 690H460M80 595l25 22M80 725l25-22M412 617l25-22M412 703l25 22" fill="none" stroke="#00f000" stroke-width="3"/>
            <rect x="94" y="631" width="331" height="60" fill="none" stroke="#fff" stroke-width="3"/>
            <rect x="108" y="644" width="296" height="30" rx="3" fill="none" stroke="#f00000" stroke-width="6"/>
            <path d="M110 672l32-35M205 648h26l-26 24M208 648l25 24M285 648h24l-24 24M288 648l22 24" fill="none" stroke="#f00000" stroke-width="5"/>
            <path d="M428 628l60-70" stroke="#fff" stroke-width="2"/>
            <g font-family="Liberation Sans, sans-serif" font-size="18" fill="#fff" text-anchor="middle">
              <text x="258" y="590">550</text>
              <text x="258" y="746">550</text>
              <text x="46" y="667">100</text>
              <text x="472" y="667">100</text>
            </g>
            <g font-family="Noto Sans CJK SC, sans-serif" font-size="23" fill="#fff">
              <text x="487" y="548">全部钢筋</text>
              <text x="487" y="573">箍筋</text>
            </g>
            <g font-family="Liberation Sans, sans-serif" font-size="18" fill="#00f000">
              <text x="594" y="548">8C10</text>
              <text x="594" y="572">C6@250</text>
            </g>
          </svg>
          <div class="ime-bar d-flex align-items-center justify-content-between">
            <svg class="ime-rays" width="128" height="31" viewBox="0 0 128 31"><path d="M0 28l14-8M30 31l12-18M34 31l10-14M112 20l16 11M110 24l12 7M108 27l8 4" stroke="#aaa" fill="none"/></svg>
            <span>A</span><span>!</span><span>简</span>
            <svg class="position-relative" width="20" height="18" viewBox="0 0 20 18"><path d="M5 0l5 2 5-2 5 5-4 3v10H4V8L0 5z" fill="#000"/></svg>
          </div>
        </div>
      </div>
      <div class="status-line d-flex">
        <div class="status-cell" style="width:147px">(X: 589 Y: 206)</div>
        <div class="status-cell flex-grow-1"></div>
      </div>
    </aside>

  </div>

  <script src="https://cdn.jsdelivr.net/npm/bootstrap@5.3.2/dist/js/bootstrap.bundle.min.js"></script>
</body>
</html>
